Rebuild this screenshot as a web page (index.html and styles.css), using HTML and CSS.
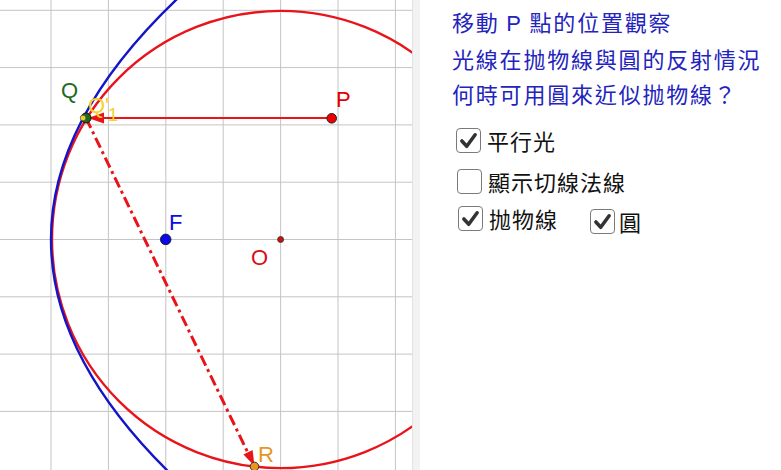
FILE: index.html
```html
<!DOCTYPE html>
<html lang="zh-Hant">
<head>
<meta charset="utf-8">
<link rel="stylesheet" href="styles.css">
</head>
<body>
<div class="app">
  <div class="graphics">
    <svg class="canvas" width="412" height="470" viewBox="0 0 412 470">
      <g class="grid">
        <line x1="51" y1="0" x2="51" y2="470"/>
        <line x1="108.4" y1="0" x2="108.4" y2="470"/>
        <line x1="165.8" y1="0" x2="165.8" y2="470"/>
        <line x1="223.2" y1="0" x2="223.2" y2="470"/>
        <line x1="280.6" y1="0" x2="280.6" y2="470"/>
        <line x1="338" y1="0" x2="338" y2="470"/>
        <line x1="395.4" y1="0" x2="395.4" y2="470"/>
        <line x1="0" y1="10.3" x2="412" y2="10.3"/>
        <line x1="0" y1="67.6" x2="412" y2="67.6"/>
        <line x1="0" y1="124.9" x2="412" y2="124.9"/>
        <line x1="0" y1="182.2" x2="412" y2="182.2"/>
        <line x1="0" y1="239.5" x2="412" y2="239.5"/>
        <line x1="0" y1="296.8" x2="412" y2="296.8"/>
        <line x1="0" y1="354.1" x2="412" y2="354.1"/>
        <line x1="0" y1="411.4" x2="412" y2="411.4"/>
      </g>
      <circle class="circle" cx="280.6" cy="239.5" r="228.6"/>
      <path class="parabola" d="M198.3,-20.5 Q-96.3,239.5 198.3,499.5"/>
      <line class="ray" x1="331.5" y1="118" x2="100" y2="118"/>
      <polygon class="red-fill" points="88,118 104,112.5 104,123.5"/>
      <line class="reflect" x1="86" y1="118" x2="249" y2="455"/>
      <polygon class="red-fill" points="254.5,466 252.6,450 243.4,454.6"/>
      <circle class="pt-q" cx="86" cy="118" r="5"/>
      <circle class="pt-q1" cx="83" cy="118" r="2.8"/>
      <circle class="pt-p" cx="331.7" cy="118.3" r="4.8"/>
      <circle class="pt-f" cx="165.7" cy="239.4" r="5.3"/>
      <circle class="pt-o" cx="280.6" cy="239.5" r="3"/>
      <circle class="pt-r" cx="254.5" cy="466.5" r="4.3"/>
      <text class="lbl lbl-q" x="61" y="98">Q</text>
      <text class="lbl lbl-q1" x="88" y="113">Q'</text>
      <text class="lbl lbl-q1 sub" x="108" y="121">1</text>
      <text class="lbl lbl-p" x="336" y="107">P</text>
      <text class="lbl lbl-f" x="169" y="230">F</text>
      <text class="lbl lbl-o" x="251" y="265">O</text>
      <text class="lbl lbl-r" x="258" y="462">R</text>
    </svg>
  </div>
  <div class="divider"></div>
  <div class="panel">
    <div class="intro">
      <p class="line">移動 <span class="latin">P</span> 點的位置觀察</p>
      <p class="line">光線在抛物線與圓的反射情況</p>
      <p class="line">何時可用圓來近似抛物線？</p>
    </div>
    <div class="options">
      <div class="opt row1">
        <span class="box checked"><svg viewBox="0 0 26 26"><path d="M5.5 13.5 L11 19.5 L20.5 6.5"/></svg></span>
        <span class="opt-text">平行光</span>
      </div>
      <div class="opt row2">
        <span class="box"></span>
        <span class="opt-text">顯示切線法線</span>
      </div>
      <div class="row3">
        <div class="opt">
          <span class="box checked"><svg viewBox="0 0 26 26"><path d="M5.5 13.5 L11 19.5 L20.5 6.5"/></svg></span>
          <span class="opt-text">抛物線</span>
        </div>
        <div class="opt opt-circle">
          <span class="box checked"><svg viewBox="0 0 26 26"><path d="M5.5 13.5 L11 19.5 L20.5 6.5"/></svg></span>
          <span class="opt-text short">圓</span>
        </div>
      </div>
    </div>
  </div>
</div>
</body>
</html>
```

FILE: styles.css
```css
html, body {
  margin: 0;
  padding: 0;
  background: #ffffff;
}
.app {
  display: flex;
  width: 781px;
  height: 470px;
  overflow: hidden;
}
.graphics {
  width: 412px;
  height: 470px;
  flex: none;
}
.canvas {
  display: block;
}
.grid line {
  stroke: #c4c4c4;
  stroke-width: 1;
}
.circle {
  fill: none;
  stroke: #e8141a;
  stroke-width: 2.4;
}
.parabola {
  fill: none;
  stroke: #1414c8;
  stroke-width: 2.4;
}
.ray {
  stroke: #e8141a;
  stroke-width: 2.2;
}
.reflect {
  stroke: #e8141a;
  stroke-width: 3;
  stroke-dasharray: 11 4 3 4;
}
.red-fill {
  fill: #e8141a;
}
.pt-q {
  fill: #1d6b1d;
  stroke: #111;
  stroke-width: 1;
}
.pt-q1 {
  fill: #f2d02a;
  stroke: #444;
  stroke-width: 0.6;
}
.pt-p {
  fill: #ee0000;
  stroke: #222;
  stroke-width: 1;
}
.pt-f {
  fill: #0a0ae6;
  stroke: #111;
  stroke-width: 0.8;
}
.pt-o {
  fill: #c81010;
  stroke: #333;
  stroke-width: 0.8;
}
.pt-r {
  fill: #e8961e;
  stroke: #333;
  stroke-width: 1;
}
.lbl {
  font-family: "Liberation Sans", Arial, sans-serif;
  font-size: 22px;
}
.lbl-q { fill: #1d6b1d; }
.lbl-q1 { fill: #f5d22a; }
.lbl-q1.sub { font-size: 18px; }
.lbl-p { fill: #e50000; }
.lbl-f { fill: #0a0ae6; }
.lbl-o { fill: #d81010; }
.lbl-r { fill: #e8961e; }

.divider {
  width: 7px;
  flex: none;
  background: #f2f2f2;
  border-left: 1px solid #e2e2e2;
}
.panel {
  flex: 1;
  padding: 4px 0 0 32px;
  font-family: "Noto Sans CJK TC", "Noto Sans CJK SC", sans-serif;
}
.intro .line {
  margin: 0;
  font-size: 22px;
  line-height: 35px;
  letter-spacing: 1.8px;
  color: #2323bd;
  white-space: nowrap;
}
.latin {
  font-family: "Liberation Sans", Arial, sans-serif;
  font-size: 22px;
}
.options {
  display: flex;
  flex-direction: column;
  margin-top: 16px;
}
.opt {
  display: flex;
  align-items: center;
  gap: 6px;
}
.row1 { margin-left: 4px; }
.row2 { margin-left: 5px; margin-top: 14px; }
.row3 {
  display: flex;
  align-items: flex-start;
  margin-left: 6px;
  margin-top: 10px;
  gap: 32px;
}
.opt-circle {
  margin-top: 3px;
}
.opt-circle .opt-text { margin-left: -2px; }
.box {
  width: 23px;
  height: 23px;
  border: 1.6px solid #7a7a7a;
  border-radius: 4px;
  background: #fff;
  flex: none;
  display: flex;
}
.box svg {
  width: 23px;
  height: 23px;
}
.box svg path {
  fill: none;
  stroke: #333;
  stroke-width: 4;
  stroke-linecap: round;
  stroke-linejoin: round;
}
.opt-text {
  font-size: 22px;
  line-height: 27px;
  color: #111;
  letter-spacing: 1px;
  white-space: nowrap;
}
```
